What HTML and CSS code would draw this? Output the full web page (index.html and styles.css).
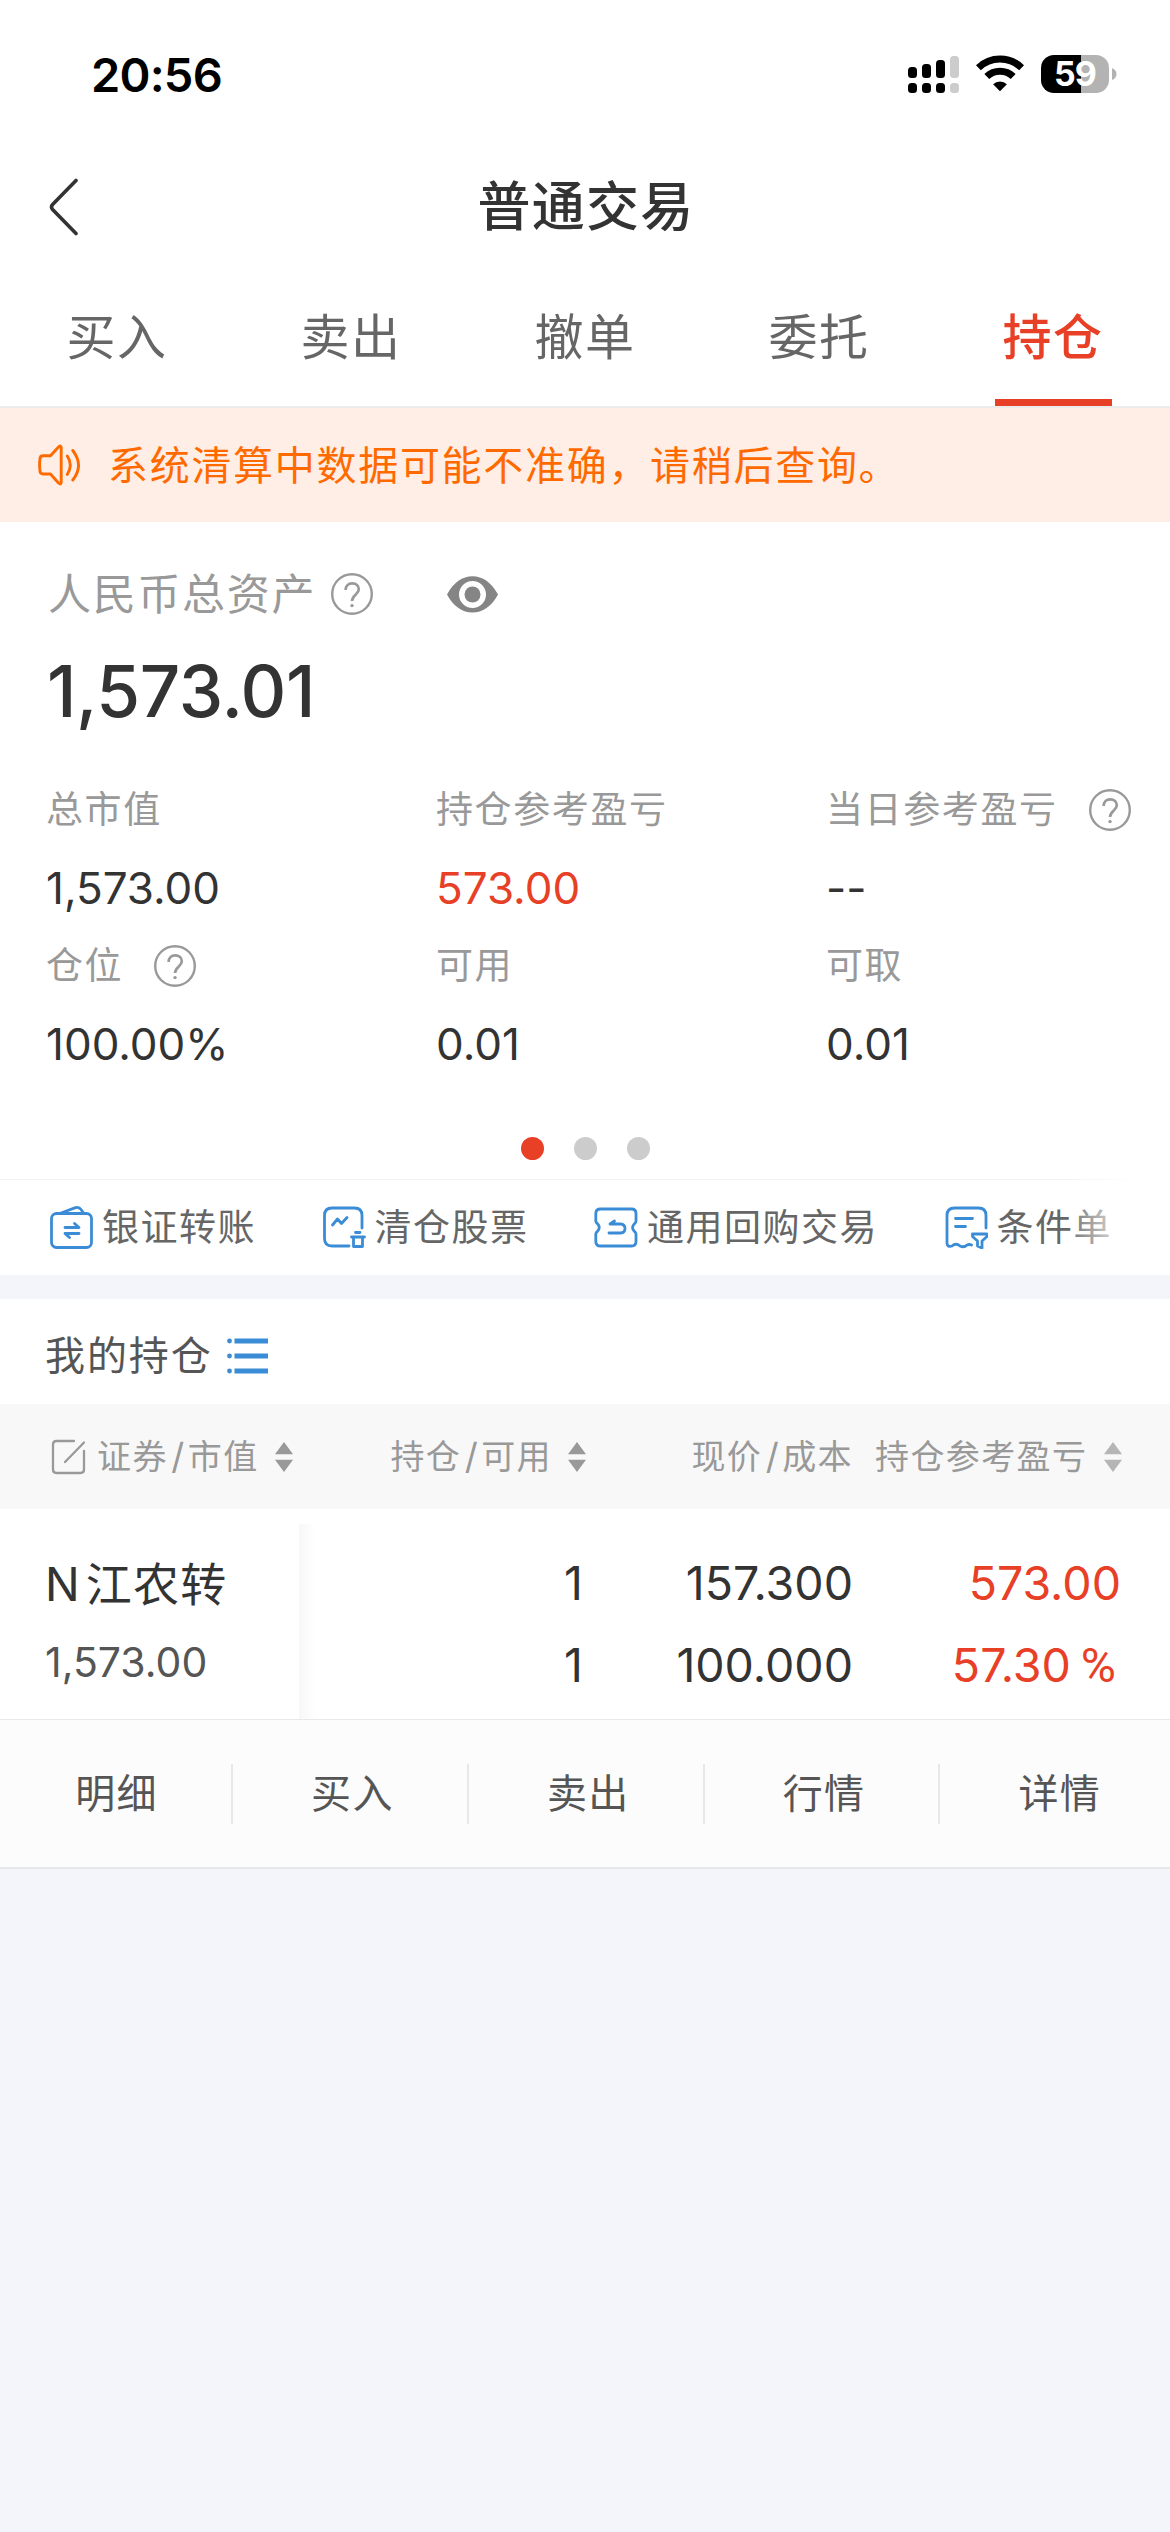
FILE: index.html
```html
<!DOCTYPE html>
<html lang="zh-CN">
<head>
<meta charset="utf-8">
<title>普通交易</title>
<link rel="stylesheet" href="styles.css">
</head>
<body>
<svg class="defs" width="0" height="0">
  <symbol id="help" viewBox="0 0 42 42">
    <circle cx="21" cy="21" r="19.8" fill="none" stroke="#999" stroke-width="2.4"/>
    <path d="M14.6 17c0-4.2 2.7-6.6 6.6-6.6s6.6 2.4 6.6 5.9c0 5.3-6.8 5.7-6.8 11.8" fill="none" stroke="#999" stroke-width="2.7"/>
    <circle cx="21" cy="32.6" r="1.7" fill="#999"/>
  </symbol>
  <symbol id="sort" viewBox="0 0 18 30">
    <path d="M9 0l9 12.3H0zM9 30l9-12.3H0z" fill="#999"/>
  </symbol>
</svg>

<header class="status">
  <span class="clock">20:56</span>
  <div class="indicators">
    <svg width="52" height="38" viewBox="0 0 52 38">
      <g fill="#000"><rect x="0" y="12" width="9" height="11" rx="3.5"/><rect x="14" y="9" width="9" height="14" rx="3.5"/><rect x="28" y="5" width="9" height="18" rx="3.5"/><rect x="0" y="28" width="9" height="10" rx="3.5"/><rect x="14" y="28" width="9" height="10" rx="3.5"/><rect x="28" y="28" width="9" height="10" rx="3.5"/></g>
      <g fill="#ccc"><rect x="42" y="1" width="9" height="22" rx="3.5"/><rect x="42" y="28" width="9" height="10" rx="3.5"/></g>
    </svg>
    <svg class="wifi" width="48" height="38" viewBox="0 0 48 38">
      <g fill="none" stroke="#000" stroke-width="7"><path d="M2.4 12.8a31 31 0 0 1 43.2 0"/><path d="M10.8 21.6a19 19 0 0 1 26.4 0"/></g>
      <path d="M24 36.2l-6.9-6.9a10 10 0 0 1 13.8 0z"/>
    </svg>
    <div class="battery"><span>59</span></div>
    <svg class="nub" width="5" height="12" viewBox="0 0 5 12"><path d="M0 0q4.5 2 4.5 6T0 12z" fill="#b3b3b3"/></svg>
  </div>
</header>

<nav class="titlebar">
  <svg class="back" width="30" height="58" viewBox="0 0 30 58"><path d="M27 2.5L3.6 26.5q-2.2 2.5 0 5L27 55.5" fill="none" stroke="#333" stroke-width="3.6" stroke-linecap="round"/></svg>
  <h1>普通交易</h1>
</nav>

<nav class="tabs">
  <a>买入</a><a>卖出</a><a>撤单</a><a>委托</a><a class="active">持仓</a>
</nav>

<div class="notice">
  <svg width="44" height="42" viewBox="0 0 44 42"><g fill="none" stroke="#ff6a00" stroke-width="2.9" stroke-linejoin="round" stroke-linecap="round"><path d="M5 11.8h7.5L20.5 3q2.7-2.2 2.7.8v34.4q0 3-2.7.8L12.5 30H5q-2.800 0-3-3-.8-6 0-12.200.2-3 3-3z"/><path d="M29.300 12q6 9.300 0 18.500M34.800 6.500q11.500 15 0 29.500"/></g></svg>
  <p>系统清算中数据可能不准确，请稍后查询。</p>
</div>

<section class="summary">
  <div class="total-label">
    <span>人民币总资产</span>
    <svg class="help" width="42" height="42"><use href="#help"/></svg>
    <svg class="eye" width="51" height="37" viewBox="0 0 51 37"><path fill="#858585" fill-rule="evenodd" d="M0 18.500C6.500 6.500 15.500.3 25.500.3S44.500 6.500 51 18.500C44.500 30.500 35.500 36.500 25.500 36.500S6.500 30.500 0 18.500zM25.500 5a13.500 13.500 0 1 0 0 27 13.500 13.500 0 0 0 0-27z"/><circle cx="25.500" cy="18.500" r="8" fill="#858585"/></svg>
  </div>
  <div class="total">1,573.01</div>
  <div class="metrics">
    <span class="k">总市值</span><span class="k">持仓参考盈亏</span><span class="k">当日参考盈亏<svg width="42" height="42"><use href="#help"/></svg></span>
    <span class="v">1,573.00</span><span class="v up">573.00</span><span class="v">--</span>
    <span class="k">仓位<svg width="42" height="42"><use href="#help"/></svg></span><span class="k">可用</span><span class="k">可取</span>
    <span class="v">100.00%</span><span class="v">0.01</span><span class="v">0.01</span>
  </div>
  <div class="pager"><i class="on"></i><i></i><i></i></div>
</section>

<section class="quick">
  <a><svg width="44" height="44" viewBox="0 0 44 44"><g class="line"><rect x="2.500" y="8.500" width="40" height="34" rx="5"/><path d="M12 8L26.500 2.600Q30 1.500 32 4.500L34.500 8"/><path d="M16 22.500h14l-4.500-4M30 28.500H16l4.500 4"/></g></svg>银证转账</a>
  <a><svg width="44" height="44" viewBox="0 0 44 44"><g class="line"><path d="M27 41H10Q2.500 41 2.500 33.500V10.500Q2.500 3 10 3H32.500Q40 3 40 10.500V23"/><path d="M10.500 20l5-6 4 4.500 5.500-6"/><path d="M33.500 27.500h4.500M29.500 32h13M31.500 32v9.500h9V32"/></g></svg>清仓股票</a>
  <a><svg width="44" height="44" viewBox="0 0 44 44"><g class="line"><path d="M6.500 4H37.500Q42 4 42 8.500V16q0 1.500-1.300 2.500-4.200 4-.2 8Q42 27.500 42 29V36.500Q42 41 37.500 41H6.500Q1.800 41 1.800 36.500V29q0-1.500 1.500-2.500 4-4 0-8Q1.800 17.500 1.800 16V8.500Q1.800 4 6.500 4z"/><path d="M15 28h11.500q4.500-.3 4.500-4.500t-4.500-4.500H16l4.500-3"/></g></svg>通用回购交易</a>
  <a><svg width="44" height="44" viewBox="0 0 44 44"><g class="line"><path d="M42 23V10.500Q42 3 34.500 3H10.500Q3 3 3 10.500V38.500Q3.500 42.500 8 41q4-3.500 8 0 4 2 7-1 2.500-1 4.500 0"/><path d="M11.500 13.500h17M11.500 21.500h10M28.500 29h14.500v2.500l-5 4.500v7l-4.500-2v-5l-5-4.500z"/></g></svg>条件单</a>
  <div class="fade"></div>
</section>

<section class="holdings">
  <h2>我的持仓<svg width="42" height="36" viewBox="0 0 42 36"><g fill="#3b8cd6"><circle cx="2.500" cy="3" r="2.400"/><circle cx="2.500" cy="18" r="2.400"/><circle cx="2.500" cy="33" r="2.400"/><path d="M7.500.5h33.500v5H7.500zM7.500 15.500h33.500v5H7.500zM7.500 30.500h33.500v5H7.500z"/></g></svg></h2>
  <div class="cols head">
    <div class="c1"><svg class="edit" width="36" height="36" viewBox="0 0 36 36"><path d="M23 2H5.500Q2 2 2 5.500V30.500Q2 34 5.500 34H29.500Q33 34 33 30.500V12M14 23L33 3.500" fill="none" stroke="#999" stroke-width="2.300" stroke-linecap="round"/></svg><span>证券<b>/</b>市值</span><svg class="sort" width="18" height="30"><use href="#sort"/></svg></div>
    <div class="c2"><span>持仓<b>/</b>可用</span><svg class="sort" width="18" height="30"><use href="#sort"/></svg></div>
    <div class="c3"><span>现价<b>/</b>成本</span></div>
    <div class="c4"><span>持仓参考盈亏</span><svg class="sort faded" width="18" height="30"><use href="#sort"/></svg></div>
  </div>
  <div class="cols row">
    <div class="c1"><span class="name">N<em>江农转</em></span><span class="worth">1,573.00</span></div>
    <div class="c2"><span>1</span><span>1</span></div>
    <div class="c3"><span>157.300</span><span>100.000</span></div>
    <div class="c4 up"><span>573.00</span><span>57.30<small>%</small></span></div>
  </div>
  <div class="actions"><a>明细</a><a>买入</a><a>卖出</a><a>行情</a><a>详情</a></div>
</section>
</body>
</html>
```
FILE: styles.css
```css
* { box-sizing: border-box; margin: 0; padding: 0; }
html { background: #f4f5fa; }
body {
  width: 1170px;
  min-height: 2532px;
  overflow-x: hidden;
  background: #f4f5fa;
  color: #333;
  font-family: Inter, "Noto Sans CJK SC", sans-serif;
  font-feature-settings: "calt" 0;
  line-height: 60px;
}
svg { display: block; flex: none; }
.defs { display: none; }
.up { color: #e84026; }

.status {
  display: flex;
  justify-content: space-between;
  align-items: center;
  height: 148px;
  padding: 0 53px 0 91px;
  background: #fff;
  color: #000;
}
.clock { font-size: 47px; font-weight: 600; letter-spacing: -0.8px; padding-top: 1px; }
.indicators { display: flex; align-items: center; }
.wifi { margin-left: 16px; }
.battery {
  display: flex;
  justify-content: center;
  align-items: center;
  width: 68px;
  height: 38px;
  margin: 0 3px 0 17px;
  border-radius: 13px;
  background: linear-gradient(90deg, #000 40px, #b3b3b3 40px);
  color: #fff;
  font-size: 34px;
  font-weight: 700;
  line-height: 38px;
  letter-spacing: -1px;
}

.titlebar {
  display: grid;
  grid-template-columns: 1fr auto 1fr;
  align-items: center;
  height: 117px;
  padding: 0 47px 0 49px;
  background: #fff;
}
h1 { font-size: 53px; font-weight: 500; letter-spacing: 1.2px; padding-top: 1px; }

.tabs {
  display: grid;
  grid-template-columns: repeat(5, 1fr);
  height: 143px;
  background: #fff;
  border-bottom: 2px solid #ebebeb;
}
.tabs a {
  display: flex;
  flex-direction: column;
  align-items: center;
  padding-top: 43px;
  color: #666;
  font-size: 49px;
  letter-spacing: 1.4px;
}
.tabs .active { color: #e84026; font-weight: 500; }
.tabs .active::after { content: ""; width: 117px; height: 7px; margin-top: 31px; background: #e84026; }

.notice {
  display: flex;
  align-items: center;
  gap: 26px;
  height: 114px;
  padding-left: 38px;
  background: #ffeee5;
  color: #ff6a00;
}
.notice p { font-size: 40px; letter-spacing: 1.7px; padding-top: 2px; }

.summary { height: 657px; padding-top: 27px; background: #fff; }
.total-label {
  display: flex;
  align-items: center;
  height: 90px;
  padding-left: 48px;
  color: #999;
  font-size: 43px;
  letter-spacing: 1.7px;
}
.total-label .help { margin-left: 15px; }
.total-label .eye { margin-left: 74px; }
.total { height: 105px; padding-left: 47px; font-size: 71px; font-weight: 500; line-height: 105px; letter-spacing: -0.4px; }
.metrics {
  display: grid;
  grid-template-columns: repeat(3, 390px);
  grid-auto-rows: 78px;
  margin-top: 27px;
  padding-left: 46px;
}
.metrics span { display: flex; align-items: center; white-space: nowrap; }
.k { color: #999; font-size: 37px; letter-spacing: 1.6px; }
.k svg { margin-left: 31px; }
.v { font-size: 44px; }
.pager { display: flex; justify-content: center; align-items: center; gap: 30px; height: 96px; padding: 35px 0 0 1px; }
.pager i { width: 23px; height: 23px; border-radius: 50%; background: #ccc; }
.pager .on { background: #e84026; }

.quick {
  position: relative;
  display: flex;
  align-items: center;
  gap: 65.5px;
  height: 96px;
  padding-left: 49px;
  background: #fff;
  border-top: 1px solid #f2f2f2;
  color: #666;
  font-size: 37px;
  letter-spacing: 1.5px;
}
.quick a { display: flex; align-items: center; gap: 9px; white-space: nowrap; }
.quick svg { margin-bottom: 2px; }
.line { fill: none; stroke: #3b8cd6; stroke-width: 2.8; stroke-linecap: round; stroke-linejoin: round; }
.fade {
  position: absolute;
  top: -1px;
  right: 0;
  bottom: 0;
  width: 100px;
  background: linear-gradient(90deg, rgba(255, 255, 255, 0.1), #fff 65px);
}

.holdings { margin-top: 24px; background: #fff; }
h2 {
  display: flex;
  align-items: center;
  gap: 14px;
  height: 105px;
  padding: 8px 0 0 45px;
  color: #555;
  font-size: 40px;
  font-weight: 400;
  letter-spacing: 1.9px;
}
.cols { display: grid; grid-template-columns: 298px 288px 267px 317px; }
.head { height: 105px; align-items: center; background: #f8f8f8; color: #999; font-size: 34px; letter-spacing: 1.4px; }
.head div { display: flex; align-items: center; white-space: nowrap; }
.head b { display: inline-block; width: 20px; font-weight: 400; font-size: 36px; text-align: center; letter-spacing: 0; }
.head .c1 { padding-left: 51px; }
.head .edit { margin-right: 10px; }
.head .sort { margin-left: 16px; }
.head .c2, .head .c3 { justify-content: flex-end; }
.head .c4 { padding-left: 22px; }
.head .faded { opacity: 0.7; margin-left: 17px; }

.row { height: 210px; font-size: 46.5px; line-height: 82px; }
.row div { display: flex; flex-direction: column; align-items: flex-end; padding-top: 33px; }
.row .c1 { align-items: flex-start; padding-left: 45px; }
.row .c2 {
  margin: 15px 0 0 1px;
  padding: 18px 3px 0 0;
  background: linear-gradient(90deg, #f7f7f7, #fff 16px);
}
.row .c4 { padding-right: 49px; }
.name { font-size: 46px; padding-top: 1px; }
.name em { margin-left: 6px; font-style: normal; letter-spacing: 1.3px; }
.worth { color: #555; font-size: 41px; line-height: 74px; }
.row small { margin: 0 5px 0 10px; font-size: 48px; line-height: 1; font-family: Roboto, sans-serif; }

.actions {
  display: flex;
  align-items: center;
  height: 150px;
  background: #fcfcfc;
  border-top: 1px solid #e8e8e8;
  border-bottom: 2px solid #e8e8e8;
  overflow: hidden;
}
.actions a {
  flex: none;
  width: 235.8px;
  padding-left: 5px;
  border-right: 2px solid #e8e8e8;
  color: #555;
  font-size: 40px;
  letter-spacing: 1.3px;
  text-align: center;
}
.actions a:first-child { width: 233px; padding-left: 2px; }
```
